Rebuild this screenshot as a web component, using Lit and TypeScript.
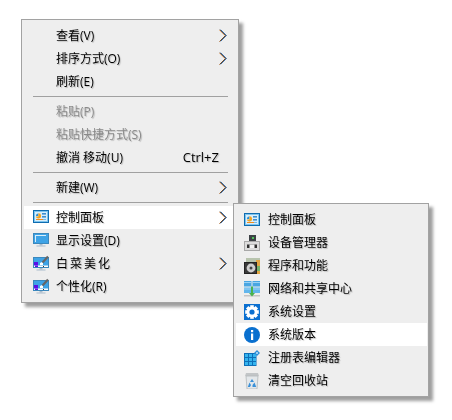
import { LitElement, html, css, svg } from "lit";
import { customElement } from "lit/decorators.js";

const teeth = [0, 45, 90, 135].map(
  (r) => svg`<rect x="6.2" y="1.2" width="3.6" height="13.6" fill="#fff" transform="rotate(${r} 8 8)"/>`
);

const icons: Record<string, unknown> = {
  panel: svg`<rect x=".5" y="1.5" width="15" height="12" fill="#7cc4ee" stroke="#0f6cb0"/><rect x="2" y="3" width="12" height="9" fill="#d9eefa"/><path d="M3 7a2.4 2.4 0 0 1 2.4-2.6V7z" fill="#2b8fd6"/><path d="M5.4 4.2a2.7 2.7 0 1 1-2.6 3.3h2.6z" fill="#f4a21e"/><rect x="9" y="4" width="4" height="1.6" fill="#3d8fd0"/><rect x="9" y="7" width="4" height="1.6" fill="#3d8fd0"/><rect x="3" y="10" width="7" height="1" fill="#f08a1d"/><rect x="10" y="10" width="3" height="1" fill="#76b8e6"/>`,
  display: svg`<rect x=".5" y="1.5" width="15" height="10" fill="#3ea3e6" stroke="#3b88bd"/><path d="M2 3h11v1H3v6H2z" fill="#d8eefa"/><rect x="6.5" y="12" width="3" height="1.5" fill="#a9bccb"/><rect x="3.5" y="13.5" width="9" height="1" fill="#a9bccb"/>`,
  theme: svg`<rect x=".5" y="2.5" width="15" height="10" fill="#3ea3e6" stroke="#3b88bd"/><rect x="1" y="7" width="4" height="5" fill="#5a10e6"/><rect x="1" y="10.5" width="14" height="1.5" fill="#fff"/><rect x="2" y="10.5" width="3" height="1.5" fill="#5a10e6"/><rect x="10" y="11" width="1" height="1" fill="#333"/><rect x="6.5" y="13" width="3" height="1.5" fill="#a9bccb"/><rect x="3.5" y="14.5" width="9" height="1" fill="#a9bccb"/><path d="M7 10V8l2-1 1 1v2z" fill="#fff"/><path d="M9.5 7.5 15 1.5" stroke="#666" stroke-width="2.2"/>`,
  device: svg`<rect x="5" y="0" width="7" height="7" fill="#3c4145"/><rect x="8" y="2" width="2" height="2" fill="#4fc25a"/><rect x=".5" y="6.500" width="15" height="9" fill="#dcdcdc" stroke="#a8a8a8"/><rect x="3" y="9.500" width="10" height="3.500" fill="#2f2f2f"/><rect x="5.500" y="9.500" width="5" height="3.500" fill="#f2f2f2"/>`,
  programs: svg`<rect x="2" y="0" width="14" height="5" fill="#b8c4ae"/><rect x="12" y="2" width="4" height="14" fill="#e2a644"/><rect x="12" y="8" width="4" height="5" fill="#76b36a"/><rect x="0" y="4" width="13" height="12" fill="#222"/><rect x="1" y="5" width="11" height="10" fill="#3a3a3a"/><circle cx="7" cy="10" r="4.4" fill="#cfcfcf"/><circle cx="7" cy="10" r="1.5" fill="#444"/>`,
  network: svg`<rect x="0" y="0" width="7.5" height="5.5" fill="#4aa6e2"/><rect x="8.5" y="0" width="7.5" height="5.5" fill="#4aa6e2"/><rect x="0" y="6.5" width="7.5" height="5.5" fill="#62b6ec"/><rect x="8.5" y="6.5" width="7.5" height="5.5" fill="#62b6ec"/><rect x="0" y="1" width="7.5" height="1" fill="#9bd3f5"/><rect x="8.5" y="1" width="7.5" height="1" fill="#9bd3f5"/><rect x="0" y="7.500" width="7.500" height="1" fill="#9bd3f5"/><rect x="8.500" y="7.500" width="7.500" height="1" fill="#9bd3f5"/><rect x="0" y="14" width="16" height="1.500" fill="#c4c4c4"/><path d="M7 5.500h2V12h2l-3 3.500L5 12h2z" fill="#49b24f"/>`,
  gear: svg`<rect width="16" height="16" fill="#0a6fd0"/>${teeth}<circle cx="8" cy="8" r="5.200" fill="#fff"/><circle cx="8" cy="8" r="2.600" fill="#0a6fd0"/>`,
  info: svg`<circle cx="8" cy="8" r="8" fill="#0a70cf"/><rect x="7" y="3" width="2.200" height="2.200" fill="#fff"/><rect x="7" y="6.500" width="2.200" height="6.500" fill="#fff"/>`,
  regedit: svg`<rect x="0" y="3" width="12.500" height="13" fill="#0d6fb8"/><g fill="#34b4ee"><rect x="1" y="4" width="3" height="3"/><rect x="5" y="4" width="3" height="3"/><rect x="9" y="4" width="3" height="3"/><rect x="1" y="8" width="3" height="3"/><rect x="5" y="8" width="3" height="3"/><rect x="9" y="8" width="3" height="3"/><rect x="1" y="12" width="3" height="3"/><rect x="5" y="12" width="3" height="3"/><rect x="9" y="12" width="3" height="3"/></g><path d="M13 0l3 3-3 3-3-3z" fill="#2f8fd8"/><circle cx="13" cy="3" r="1" fill="#bde4fb"/>`,
  bin: svg`<path d="M2 0h12l1 3H1z" fill="#c2c5c7"/><path d="M2 3h12l-1 13H3z" fill="#e3e7ea" stroke="#b3b7ba" stroke-width=".8"/><path d="M8 6l2 3H6z" fill="#3a90d8"/><path d="M5.500 9.500 7 12l-1 2H3.800z" fill="#3a90d8"/><path d="M10.500 9.500 12.200 14H8.500V12z" fill="#3a90d8"/>`,
};

const icon = (n?: string) =>
  n ? html`<svg class="icon" viewBox="0 0 16 16" width="16" height="16">${icons[n]}</svg>` : html`<span class="icon"></span>`;

const chev = "M1 .7 6.800 6.500 1 12.300";
const arrow = html`<svg class="arrow" width="9" height="13" viewBox="0 0 9 13"><g fill="none" stroke-width="1">
  <path d="${chev}" stroke="#2f7fd6" transform="translate(.6 0)"/>
  <path d="${chev}" stroke="#e07a1f" transform="translate(-.5 .2)"/>
  <path d="${chev}" stroke="#222" stroke-width=".8"/></g></svg>`;

type Item = { t?: string; i?: string; k?: string; a?: boolean; dis?: boolean; hov?: boolean; wide?: boolean; sep?: boolean };

const main: Item[] = [
  { t: "查看(V)", a: true },
  { t: "排序方式(O)", a: true },
  { t: "刷新(E)" },
  { sep: true },
  { t: "粘贴(P)", dis: true },
  { t: "粘贴快捷方式(S)", dis: true },
  { t: "撤消 移动(U)", k: "Ctrl+Z" },
  { sep: true },
  { t: "新建(W)", a: true },
  { sep: true },
  { t: "控制面板", i: "panel", a: true, hov: true },
  { t: "显示设置(D)", i: "display" },
  { t: "白菜美化", i: "theme", a: true, wide: true },
  { t: "个性化(R)", i: "theme" },
];
const sub: Item[] = [
  { t: "控制面板", i: "panel" },
  { t: "设备管理器", i: "device" },
  { t: "程序和功能", i: "programs" },
  { t: "网络和共享中心", i: "network" },
  { t: "系统设置", i: "gear" },
  { t: "系统版本", i: "info", hov: true },
  { t: "注册表编辑器", i: "regedit" },
  { t: "清空回收站", i: "bin" },
];

@customElement("app-root")
export class AppRoot extends LitElement {
  static styles = css`
    :host { display: block; width: 452px; height: 420px; background: #fff; overflow: hidden;
      font-family: "Open Sans", "Noto Sans CJK SC", sans-serif; font-size: 12px; color: #000; }
    .stage { position: relative; padding: 19px 0 0 21px; filter: blur(0.35px); height: 420px; box-sizing: border-box; }
    .menu { background: #eeeeee; border: 1.5px solid #a2a2a2; box-shadow: 4px 4px 3px rgba(0,0,0,.38); box-sizing: border-box; }
    .main { width: 218px; height: 284px; padding: 3.5px 0 0 2px; }
    .sub { position: absolute; left: 233px; top: 203px; width: 196px; height: 193.5px; padding: 4px 1px 0 2px; }
    .row { display: flex; align-items: center; height: 23px; text-shadow: 1px 1px 1px rgba(0,0,0,.22); }
    .main .row { padding: 0 10px 0 9px; margin-right: -1px; }
    .sub .row { padding: 0 8px 0 8px; }
    .icon { flex: none; width: 16px; height: 16px; }
    .label { flex: 1; margin-left: 8px; line-height: 23px; white-space: nowrap; }
    .main .label { margin-left: 7px; }
    .hov { background: #fff; }
    .dis { color: #8a8a8a; }
    .wide .label { letter-spacing: 2px; }
    .key { font-size: 13px; margin-right: 10px; }
    .arrow { flex: none; margin-right: 1px; }
    .sep { height: 1px; background: #a0a0a0; margin: 3px 10px 3px 9px; }
  `;
  private row(x: Item) {
    if (x.sep) return html`<div class="sep"></div>`;
    const cls = ["row", x.hov ? "hov" : "", x.dis ? "dis" : "", x.wide ? "wide" : ""].join(" ");
    return html`<div class="${cls}">${icon(x.i)}<span class="label">${x.t}</span>${x.k ? html`<span class="key">${x.k}</span>` : ""}${x.a ? arrow : ""}</div>`;
  }
  render() {
    return html`<div class="stage">
      <div class="menu main">${main.map((x) => this.row(x))}</div>
      <div class="menu sub">${sub.map((x) => this.row(x))}</div>
    </div>`;
  }
}
